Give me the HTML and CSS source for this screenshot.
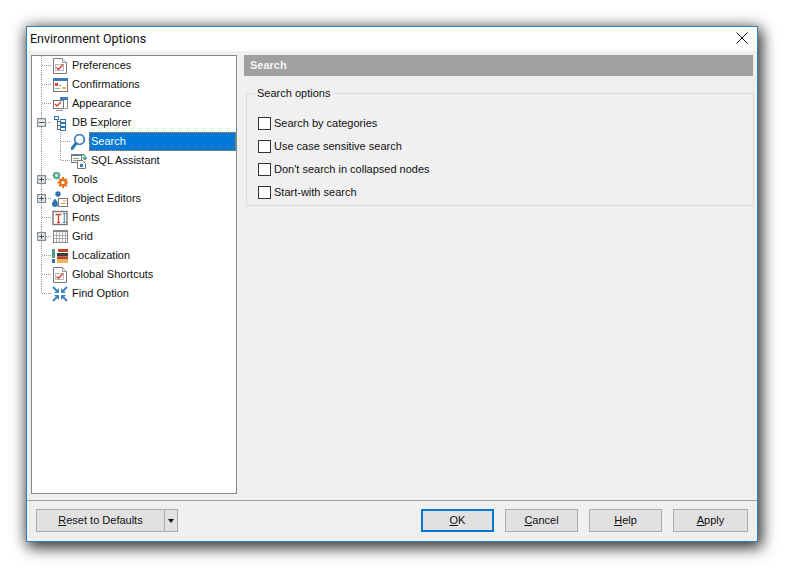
FILE: index.html
```html
<!DOCTYPE html>
<html lang="en">
<head>
	<meta charset="utf-8">
	<title>Environment Options</title>
	<link rel="stylesheet" href="styles.css">
</head>
<body>
	<div class="desktop">
	<div class="window">
		<div class="titlebar">
			<span class="title">Environment Options</span>
			<svg class="close" width="12" height="12" viewBox="0 0 12 12"><path d="M.5 .5l11 11M11.500 .5l-11 11" stroke="#111" fill="none"/></svg>
		</div>
		<div class="main">
			<div class="tree">
				<div class="node">
					<span class="gutter"></span>
					<svg class="icon" viewBox="0 0 16 16"><path d="M1.500 .5h9l4 4v11h-13z" fill="#fff" stroke="#777"/><path d="M10.500 .5v4h4" fill="#eee" stroke="#999"/><rect x="3.500" y="6.500" width="8" height="6" fill="#fff" stroke="#bbb"/><path d="M4.500 9.500l2 2 4.500-5" fill="none" stroke="#d9472b" stroke-width="1.500"/></svg>
					<span class="label">Preferences</span>
				</div>
				<div class="node">
					<span class="gutter"></span>
					<svg class="icon" viewBox="0 0 16 16"><rect x="1.500" y="1.500" width="14" height="13" fill="#fff" stroke="#777"/><rect x="1" y="1" width="15" height="3" fill="#3f7cb8"/><rect x="3" y="6" width="3" height="3" fill="#d9472b"/><path d="M7 8.500h2" stroke="#888"/><rect x="10" y="10" width="4" height="2" fill="#eeb655"/><path d="M3 11.500h5" stroke="#aaa"/></svg>
					<span class="label">Confirmations</span>
				</div>
				<div class="node">
					<span class="gutter"></span>
					<svg class="icon" viewBox="0 0 16 16"><path d="M8.500 1.500h7v11h-3" fill="#fff" stroke="#888"/><rect x="8" y="1" width="8" height="3" fill="#3f7cb8"/><rect x="1.500" y="4.500" width="10" height="8" fill="#fff" stroke="#777"/><path d="M3 8l2 2 4-4" fill="none" stroke="#d9472b" stroke-width="1.500"/><path d="M4 14.500h7" stroke="#999"/></svg>
					<span class="label">Appearance</span>
				</div>
				<div class="node">
					<span class="gutter"><span class="toggle minus"></span></span>
					<svg class="icon" viewBox="0 0 16 16"><rect x="2.500" y="1.500" width="4" height="3" fill="#fff" stroke="#2f74b5"/><path d="M5.500 4.500v10M5.500 6.500h3M5.500 10.500h3M5.500 14.500h3" fill="none" stroke="#666"/><rect x="8.500" y="4.500" width="5" height="3" fill="#fff" stroke="#2f74b5"/><rect x="8.500" y="8.500" width="5" height="3" fill="#fff" stroke="#2f74b5"/><rect x="8.500" y="12.500" width="5" height="3" fill="#fff" stroke="#2f74b5"/></svg>
					<span class="label">DB Explorer</span>
				</div>
				<div class="node child">
					<span class="gutter"></span>
					<svg class="icon" viewBox="0 0 16 16"><circle cx="8.500" cy="5.500" r="4.800" fill="none" stroke="#3a7fbd" stroke-width="1.800"/><path d="M5 9.500l-4 5" fill="none" stroke="#2f74b5" stroke-width="3" stroke-linecap="round"/></svg>
					<span class="label selected">Search</span>
				</div>
				<div class="node child last">
					<span class="gutter"></span>
					<svg class="icon" viewBox="0 0 16 16"><rect x=".5" y="1.500" width="10" height="8" fill="#fff" stroke="#777"/><rect x="0" y="1" width="11" height="2" fill="#6b7c8c"/><path d="M2 5.500h6M2 7.500h5" stroke="#999"/><path d="M11 1.500c3 0 3.500 2 3 4M12 4.500l2 2 2-2" fill="none" stroke="#3e9c74" stroke-width="1.300"/><path d="M6.500 7.500h5l3 3v5h-8z" fill="#fff" stroke="#777"/><rect x="9" y="11" width="3" height="3" fill="#3f7cb8"/></svg>
					<span class="label">SQL Assistant</span>
				</div>
				<div class="node">
					<span class="gutter"><span class="toggle plus"></span></span>
					<svg class="icon" viewBox="0 0 16 16"><circle cx="4.500" cy="3.500" r="2.400" fill="none" stroke="#52a78e" stroke-width="2"/><path d="M4.500 -.5v1.500M4.500 6v1.500M.5 3.500h1.500M7 3.500h1.500M1.700 .7l1 1M6.300 5.300l1 1M7.300 .7l-1 1M2.700 5.300l-1 1" stroke="#52a78e" stroke-width="1.400"/><circle cx="11" cy="10.500" r="2.800" fill="none" stroke="#e2751f" stroke-width="2.400"/><path d="M11 5v2M11 14v2M5.500 10.500h2M14.500 10.500h2M7.200 6.700l1.300 1.300M13.500 13l1.300 1.300M14.800 6.700l-1.300 1.300M8.500 13l-1.300 1.300" stroke="#e2751f" stroke-width="2"/></svg>
					<span class="label">Tools</span>
				</div>
				<div class="node">
					<span class="gutter"><span class="toggle plus"></span></span>
					<svg class="icon" viewBox="0 0 16 16"><circle cx="6" cy="3" r="2.700" fill="#2f74b5"/><path d="M3 7.500c2 2.500 3 3.500 3 5.500a3 3 0 0 1-6 0c0-2 1.500-3.500 3-5.500z" fill="#2f74b5"/><rect x="6.500" y="7.500" width="9" height="8" fill="#fff" stroke="#777"/><path d="M11 10h3M9 12.500h5" stroke="#e2a04f"/></svg>
					<span class="label">Object Editors</span>
				</div>
				<div class="node">
					<span class="gutter"></span>
					<svg class="icon" viewBox="0 0 16 16"><rect x="1" y="1.500" width="14" height="13" fill="#fff" stroke="#777" stroke-width="1.400"/><path d="M3.500 4.500h6M6.500 4.500v8M5 12.500h3" fill="none" stroke="#d9472b" stroke-width="1.300"/><path d="M11 3.500h2.500M12.250 3.500v9M11 12.500h2.500" fill="none" stroke="#3f7cb8"/></svg>
					<span class="label">Fonts</span>
				</div>
				<div class="node">
					<span class="gutter"><span class="toggle plus"></span></span>
					<svg class="icon" viewBox="0 0 16 16"><rect x="1.500" y="1.500" width="14" height="12" fill="#fff" stroke="#888"/><rect x="1" y="1" width="15" height="2" fill="#888"/><path d="M4.500 3v10M7.500 3v10M10.500 3v10M13.500 3v10M2 6.500h13M2 9.500h13" stroke="#aaa"/></svg>
					<span class="label">Grid</span>
				</div>
				<div class="node">
					<span class="gutter"></span>
					<svg class="icon" viewBox="0 0 16 16"><rect x="0" y="1" width="3" height="9" fill="#4f9e80"/><rect x="0" y="11" width="3" height="4" fill="#2f74b5"/><rect x="6" y="1" width="10" height="3" fill="#c8452b"/><rect x="5" y="5" width="11" height="3.500" fill="#3d3d3d"/><rect x="5" y="8.500" width="11" height="3" fill="#c8452b"/><rect x="5" y="11.500" width="11" height="3.500" fill="#eeb655"/></svg>
					<span class="label">Localization</span>
				</div>
				<div class="node">
					<span class="gutter"></span>
					<svg class="icon" viewBox="0 0 16 16"><path d="M1.500 .5h9l4 4v11h-13z" fill="#fff" stroke="#777"/><path d="M10.500 .5v4h4" fill="#eee" stroke="#999"/><rect x="3.500" y="6.500" width="8" height="6" fill="#fff" stroke="#bbb"/><path d="M4.500 9.500l2 2 4.500-5" fill="none" stroke="#d9472b" stroke-width="1.500"/></svg>
					<span class="label">Global Shortcuts</span>
				</div>
				<div class="node end">
					<span class="gutter"></span>
					<svg class="icon" viewBox="0 0 16 16"><path d="M1 1l5 5M15 1l-5 5M1 15l5-5M15 15l-5-5" fill="none" stroke="#3f86c4" stroke-width="2"/><path d="M7 7h-5l5-5zM9 7h5l-5-5zM7 9h-5l5 5zM9 9h5l-5 5z" fill="#3f86c4"/></svg>
					<span class="label">Find Option</span>
				</div>
			</div>
			<div class="pane">
				<div class="pane-head">Search</div>
				<fieldset class="group">
					<legend>Search options</legend>
					<div class="check"><span class="box"></span>Search by categories</div>
					<div class="check"><span class="box"></span>Use case sensitive search</div>
					<div class="check"><span class="box"></span>Don't search in collapsed nodes</div>
					<div class="check"><span class="box"></span>Start-with search</div>
				</fieldset>
			</div>
		</div>
		<div class="footer">
			<div class="split">
				<button type="button" class="btn reset"><u>R</u>eset to Defaults</button>
				<button type="button" class="btn arrow"><span class="caret"></span></button>
			</div>
			<button type="button" class="btn default"><u>O</u>K</button>
			<button type="button" class="btn"><u>C</u>ancel</button>
			<button type="button" class="btn"><u>H</u>elp</button>
			<button type="button" class="btn apply"><u>A</u>pply</button>
		</div>
	</div>
	</div>
</body>
</html>
```

FILE: styles.css
```css
/* Page and dialog frame */
body {
	margin: 0;
	background: #fff;
	font-family: "Liberation Sans", Arial, sans-serif;
	font-size: 11px;
	color: #111;
}

.desktop {
	height: 571px;
	padding: 26px 0 0 26px;
	box-sizing: border-box;
	overflow: hidden;
}

.window {
	width: 730px;
	height: 514px;
	display: flex;
	flex-direction: column;
	border: 1px solid #2b7fc9;
	background: #f0f0f0;
	box-shadow: 0 0 14px rgba(0, 0, 0, 0.35), 3px 5px 14px 1px rgba(0, 0, 0, 0.7);
}

.titlebar {
	height: 24px;
	flex: none;
	box-sizing: border-box;
	display: flex;
	align-items: center;
	justify-content: space-between;
	padding: 0 9px 2px 3px;
	background: #fff;
}

.title {
	font-family: Roboto, sans-serif;
	font-size: 12.5px;
}

/* Tree on the left */
.main {
	flex: 1;
	display: flex;
	gap: 7px;
	padding: 4px 3px 6px 4px;
	border-bottom: 1px solid #a0a0a0;
}

.tree {
	width: 204px;
	flex: none;
	border: 1px solid #828790;
	background: #fff;
}

.node {
	height: 19px;
	display: flex;
	align-items: center;
}

.gutter {
	width: 20px;
	height: 19px;
	flex: none;
	display: flex;
	align-items: center;
	padding-left: 5px;
	box-sizing: border-box;
	background:
		repeating-linear-gradient(to bottom, #999 0 1px, transparent 1px 2px) 9px 0 / 1px 100% no-repeat,
		repeating-linear-gradient(to right, #999 0 1px, transparent 1px 2px) 10px 9px / 10px 1px no-repeat;
}

.node.end .gutter {
	background:
		repeating-linear-gradient(to bottom, #999 0 1px, transparent 1px 2px) 9px 0 / 1px 10px no-repeat,
		repeating-linear-gradient(to right, #999 0 1px, transparent 1px 2px) 10px 9px / 10px 1px no-repeat;
}

.node.child .gutter {
	width: 39px;
	background:
		repeating-linear-gradient(to bottom, #999 0 1px, transparent 1px 2px) 9px 0 / 1px 100% no-repeat,
		repeating-linear-gradient(to bottom, #999 0 1px, transparent 1px 2px) 28px 0 / 1px 100% no-repeat,
		repeating-linear-gradient(to right, #999 0 1px, transparent 1px 2px) 29px 9px / 10px 1px no-repeat;
}

.node.child.last .gutter {
	background:
		repeating-linear-gradient(to bottom, #999 0 1px, transparent 1px 2px) 9px 0 / 1px 100% no-repeat,
		repeating-linear-gradient(to bottom, #999 0 1px, transparent 1px 2px) 28px 0 / 1px 10px no-repeat,
		repeating-linear-gradient(to right, #999 0 1px, transparent 1px 2px) 29px 9px / 10px 1px no-repeat;
}

.toggle {
	width: 9px;
	height: 9px;
	box-sizing: border-box;
	border: 1px solid #8c8c8c;
	box-shadow: inset 0 0 0 1px #d0d0d0;
	background-color: #f0f0f0;
	background-repeat: no-repeat;
}

.toggle.minus {
	background-image: linear-gradient(#2b4f7c, #2b4f7c);
	background-size: 5px 1px;
	background-position: 1px 3px;
}

.toggle.plus {
	background-image: linear-gradient(#2b4f7c, #2b4f7c), linear-gradient(#2b4f7c, #2b4f7c);
	background-size: 5px 1px, 1px 5px;
	background-position: 1px 3px, 3px 1px;
}

.icon {
	width: 16px;
	height: 16px;
	flex: none;
}

.label {
	margin-left: 2px;
	padding: 0 2px;
	height: 19px;
	line-height: 19px;
	white-space: nowrap;
}

.label.selected {
	flex: 1;
	box-sizing: border-box;
	background: #0078d7;
	color: #fff;
	outline: 1px dotted #e08a3c;
	outline-offset: -1px;
}

/* Right pane */
.pane {
	flex: 1;
	min-width: 0;
}

.pane-head {
	height: 21px;
	line-height: 21px;
	margin-right: 1px;
	padding-left: 6px;
	background: #a0a0a0;
	color: #f4f4f4;
	font-weight: bold;
}

.group {
	margin: 11px 0 0 2px;
	padding: 17px 11px 6px;
	border: 1px solid #dcdcdc;
	display: flex;
	flex-direction: column;
	gap: 10px;
}

.group legend {
	margin-left: -4px;
	padding: 0 3px;
	line-height: 13px;
}

.check {
	height: 13px;
	line-height: 13px;
	display: flex;
	align-items: center;
}

.box {
	width: 13px;
	height: 13px;
	box-sizing: border-box;
	margin-right: 3px;
	border: 1px solid #333;
	background: #fff;
}

/* Bottom buttons */
.footer {
	height: 40px;
	flex: none;
	box-sizing: border-box;
	display: flex;
	align-items: flex-start;
	gap: 11px;
	padding: 8px 9px 0;
}

.split {
	display: flex;
	margin-right: auto;
}

.btn {
	width: 73px;
	height: 23px;
	padding: 0 0 2px;
	box-sizing: border-box;
	border: 1px solid #adadad;
	background: #e1e1e1;
	color: #111;
	font-family: inherit;
	font-size: 11px;
}

.btn.default {
	border: 2px solid #0078d7;
}

.btn.apply {
	width: 75px;
}

.btn.reset {
	width: 129px;
}

.btn.arrow {
	width: 13px;
	padding: 0;
	border-left: 0;
	display: flex;
	align-items: center;
	justify-content: center;
}

.caret {
	width: 0;
	height: 0;
	border: 3.5px solid transparent;
	border-top: 4px solid #111;
	border-bottom: 0;
}
```
